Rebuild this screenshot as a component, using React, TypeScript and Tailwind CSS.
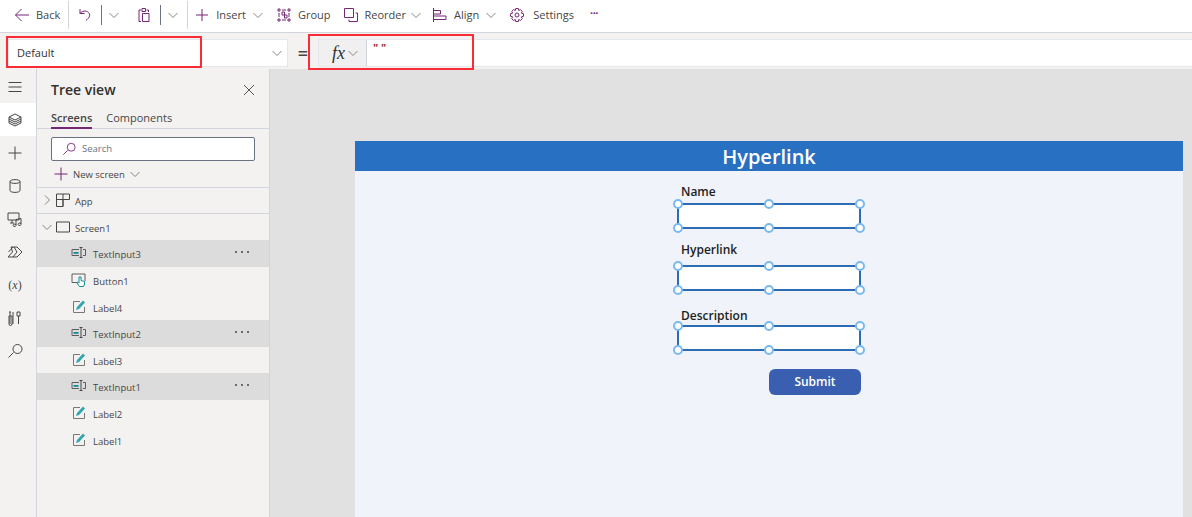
import React from "react";

const P = "#742774";
const Chevron = ({ c = "mr-0", dir = "d" }: { c?: string; dir?: "d" | "r" }) => (
  <svg viewBox="0 0 12 12" className={`w-3 h-3 shrink-0 ${c}`} fill="none" stroke="#7a7876" strokeWidth="0.9">
    {dir === "d" ? <path d="M1.500 4l4.500 4.500L10.500 4" /> : <path d="M4 1.500L8.500 6 4 10.500" />}
  </svg>
);
const Sep = ({ c = "" }: { c?: string }) => <div className={`w-px shrink-0 ${c}`} />;
const Ic = ({ children, c = "" }: { children: React.ReactNode; c?: string }) => (
  <svg viewBox="0 0 16 16" className={`w-4 h-4 shrink-0 ${c}`} fill="none" stroke={P} strokeWidth="1">
    {children}
  </svg>
);
const G = ({ children, c = "" }: { children: React.ReactNode; c?: string }) => (
  <svg viewBox="0 0 16 16" className={`w-4 h-4 shrink-0 ${c}`} fill="none" stroke="#484644" strokeWidth="1">
    {children}
  </svg>
);

function Toolbar() {
  return (
    <div className="h-8 box-content border-b border-gray-300 bg-white shrink-0">
      <div className="h-7.5 flex items-center pl-3.5 text-[11px] text-[#484644]">
        <Ic><path d="M15 8H1.500M7.500 2L1.500 8l6 6" /></Ic>
        <span className="ml-1.5">Back</span>
        <Sep c="ml-2 h-7 bg-gray-300" />
        <Ic c="ml-2"><path d="M3 2v4.500h4.500M3 6.500C5 4 9 3 11.500 5.500c2 2 1.500 5-2.500 8" /></Ic>
        <Sep c="ml-2 h-5 bg-gray-500" />
        <Chevron c="ml-1.5" />
        <Ic c="ml-4"><path d="M5 3H3v11.500h2M6 1.500h3.500v3H6zM10.500 3H12.500v2M6.500 6.500h6.500v8H6.500z" /></Ic>
        <Sep c="ml-2 h-5 bg-gray-500" />
        <Chevron c="ml-1.5" />
        <Sep c="ml-2 h-7 bg-gray-300" />
        <Ic c="ml-1.5"><path d="M8 2v12M2 8h12" /></Ic>
        <span className="ml-1.5">Insert</span>
        <Chevron c="ml-1.5" />
        <Ic c="ml-3"><path d="M2 2h2v2H2zM12 2h2v2h-2zM2 12h2v2H2zM12 12h2v2h-2zM6 5h2.500v3H6zM8.500 8H11v3H8.500zM6 3h4M6 13h4M3 6v4M13 6v4" /></Ic>
        <span className="ml-1.5">Group</span>
        <Ic c="ml-3"><path d="M1.500 1.500h9v9h-9zM12.500 6H14.500v8.500H6V12.500" /></Ic>
        <span className="ml-1.5">Reorder</span>
        <Chevron c="ml-1" />
        <Ic c="ml-2.5"><path d="M1.500 1v14M1.500 3.500h7v3.500h-7M1.500 9h12.500v3.500H1.500" /></Ic>
        <span className="ml-1.5">Align</span>
        <Chevron c="ml-1.5" />
        <Ic c="ml-3"><path d="M6.700 1.500h2.600l.4 2 1.800-.9 1.800 1.800-1 1.700 2.200.6v2.600l-2.200.6 1 1.700-1.800 1.800-1.800-.9-.4 2H6.700l-.4-2-1.800.9-1.800-1.800 1-1.700-2.200-.6V6.700l2.200-.6-1-1.700 1.800-1.800 1.800.9z" /><circle cx="8" cy="8" r="2" /></Ic>
        <span className="ml-2">Settings</span>
        <span className="ml-4 font-bold tracking-tighter -mt-1" style={{ color: P }}>···</span>
      </div>
    </div>
  );
}

function FormulaBar() {
  return (
    <div className="h-9 bg-[#f3f2f1] flex items-center pl-2 pt-1 shrink-0 text-[11px] text-[#323130]">
      <div className="w-70 h-7 bg-white border border-gray-200 flex items-center justify-between pl-2 pr-1">
        <span>Default</span>
        <Chevron />
      </div>
      <span className="w-7.5 text-center text-lg font-semibold text-[#484644] leading-none">=</span>
      <div className="flex-1 h-7 flex border border-gray-200 border-r-0 bg-white">
        <div className="w-12 pl-1.5 bg-[#f0f0f0] border-r border-gray-300 flex items-center justify-center gap-0.5">
          <span className="font-['Liberation_Serif',serif] italic text-lg leading-none text-[#323130]">fx</span>
          <Chevron />
        </div>
        <span className="ml-1.5 text-[#a4262c] font-bold leading-4">" "</span>
      </div>
    </div>
  );
}

const railIcons: React.ReactNode[] = [
  <path d="M1.500 3.500h13M1.500 8h13M1.500 12.500h13" />,
  <path d="M8 2l6 3-6 3-6-3zM2 7l6 3 6-3M2 9l6 3 6-3M2 5v6l6 3 6-3V5" />,
  <path d="M8 1.500v13M1.500 8h13" />,
  <path d="M3 3.500c0-2.500 10-2.500 10 0v9c0 2.500-10 2.500-10 0zM3 3.500c0 2.500 10 2.500 10 0" />,
  <path d="M1 2h11v7H1zM5 9v3M3 12h4M9 14.500v-6l5-1v6M9 14.500a1.500 1.200 0 1 1 0-.5M14 13.500a1.500 1.200 0 1 1 0-.5" />,
  <path d="M4 3h6l5 5-5 5H1l4.500-5zM1.500 8L6 3M6 13l4-5-3-5" />,
  null,
  <path d="M3 2v12M6 2v12M2 2h2M10 2h3v4h-3zM11.500 6v8M5 14a1.500 1.500 0 0 1-3 0V6h3z" />,
  <path d="M6.500 9.500L1.500 14.500M6 6a4.500 4.500 0 1 0 9 0 4.500 4.500 0 1 0-9 0" />,
];

function Rail() {
  return (
    <div className="w-9 box-content border-r border-gray-300 bg-[#f3f2f1] shrink-0 pt-px">
      <div className="grid grid-rows-9 h-[297px]">
        {railIcons.map((d, i) => (
          <div key={i} className={`flex items-center justify-center pr-1.5 ${i === 1 ? "bg-white" : ""}`}>
            {d ? (
              <G>{d}</G>
            ) : (
              <span className="text-xs font-['Liberation_Serif',serif] text-[#484644]">
                (<i>x</i>)
              </span>
            )}
          </div>
        ))}
      </div>
    </div>
  );
}

const TextInputIcon = () => (
  <svg viewBox="0 0 16 16" className="w-4 h-4 shrink-0" fill="none" strokeWidth="1">
    <path d="M8 4.500H1v6h7M12 4.500h2.500v6H12" stroke="#605e5c" />
    <path d="M2.500 7h5v1.800h-5z" fill="#0b8e94" stroke="none" />
    <path d="M8.500 2.500h3M8.500 12.500h3M10 2.500v10" stroke="#484644" />
  </svg>
);
const LabelIcon = () => (
  <svg viewBox="0 0 16 16" className="w-4 h-4 shrink-0" fill="none" strokeWidth="1">
    <path d="M13.500 8v5.500h-11v-11H9" stroke="#7a7876" />
    <path d="M5 11l1-3 6-6.500 2 2L8 10z" fill="#2ea8ad" stroke="none" />
  </svg>
);
const ButtonIcon = () => (
  <svg viewBox="0 0 16 16" className="w-4 h-4 shrink-0" fill="none" strokeWidth="1">
    <path d="M6 10.500H1V2h13v7" stroke="#605e5c" />
    <path d="M8 5v6l-1.500-1-.5 1 2.500 3.500h4l1-2.500v-2.500L10 8.500V5z" stroke="#0b8e94" fill="white" />
  </svg>
);

const items: { n: string; t: "i" | "b" | "l" }[] = [
  { n: "TextInput3", t: "i" },
  { n: "Button1", t: "b" },
  { n: "Label4", t: "l" },
  { n: "TextInput2", t: "i" },
  { n: "Label3", t: "l" },
  { n: "TextInput1", t: "i" },
  { n: "Label2", t: "l" },
  { n: "Label1", t: "l" },
];

function Panel() {
  return (
    <div className="w-58 box-content border-r border-gray-300 bg-[#f3f2f1] shrink-0 flex flex-col text-[#484644] text-[9.500px]">
      <div className="h-6.5 mt-2 px-3.5 flex items-center justify-between">
        <span className="text-sm font-semibold text-[#323130]">Tree view</span>
        <svg viewBox="0 0 12 12" className="w-3 h-3" fill="none" stroke="#484644" strokeWidth="0.9"><path d="M1 1l10 10M11 1L1 11" /></svg>
      </div>
      <div className="mt-0.5 h-6 border-b border-gray-300 pl-3.5 flex gap-3.5 text-[11px]">
        <span className="h-6 border-b-2 border-[#742774] font-semibold pt-0.5 leading-5.5">Screens</span>
        <span className="pt-0.5 leading-5.5">Components</span>
      </div>
      <div className="mx-3.5 mt-2 h-6 bg-white border border-gray-500 rounded-xs flex items-center pl-2.5 gap-1.5 text-gray-500">
        <svg viewBox="0 0 16 16" className="w-3.5 h-3.5" fill="none" stroke={P} strokeWidth="1"><path d="M6.500 9.500L1.500 14.500M6 6a4.500 4.500 0 1 0 9 0 4.500 4.500 0 1 0-9 0" /></svg>
        <span>Search</span>
      </div>
      <div className="h-6.5 pl-4 flex items-center">
        <Ic><path d="M8 1.500v13M1.500 8h13" /></Ic>
        <span className="ml-1 pt-0.5">New screen</span>
        <Chevron c="ml-1" />
      </div>
      <div className="grid grid-rows-10 h-[266px]">
        <div className="flex items-center border-y border-gray-300 pl-1">
          <Chevron dir="r" />
          <G c="ml-0.5"><path d="M1.500 2h13v5.500h-13zM1.500 2v12.500H8V2M8 7.500v7" /></G>
          <span className="ml-1 pt-1">App</span>
        </div>
        <div className="flex items-center pl-1">
          <Chevron />
          <G c="ml-0.5"><path d="M1.500 3h13v10h-13z" /></G>
          <span className="ml-1 pt-1">Screen1</span>
        </div>
        {items.map((it) => (
          <div key={it.n} className={`flex items-center pl-8.5 pr-5 ${it.t === "i" ? "bg-[#dcdcdc]" : ""}`}>
            {it.t === "i" ? <TextInputIcon /> : it.t === "b" ? <ButtonIcon /> : <LabelIcon />}
            <span className="ml-1.5 flex-1 pt-1">{it.n}</span>
            {it.t === "i" && (
              <span className="flex gap-1 -mt-0.5">
                <i className="w-0.5 h-0.5 rounded-full bg-[#484644]" />
                <i className="w-0.5 h-0.5 rounded-full bg-[#484644]" />
                <i className="w-0.5 h-0.5 rounded-full bg-[#484644]" />
              </span>
            )}
          </div>
        ))}
      </div>
    </div>
  );
}

const Handle = ({ c }: { c: string }) => (
  <span className={`absolute w-2.5 h-2.5 rounded-full bg-white border-2 border-[#7ab8ee] ${c}`} />
);

function Selected() {
  return (
    <div className="relative h-6.5 w-full bg-white border-2 border-[#2b6cb5] shrink-0">
      <Handle c="-left-1.5 -top-1.5" />
      <Handle c="left-1/2 -translate-x-1/2 -top-1.5" />
      <Handle c="-right-1.5 -top-1.5" />
      <Handle c="-left-1.5 -bottom-1.5" />
      <Handle c="left-1/2 -translate-x-1/2 -bottom-1.5" />
      <Handle c="-right-1.5 -bottom-1.5" />
    </div>
  );
}

function Canvas() {
  return (
    <div className="flex-1 bg-[#e1e1e1] pt-18 pl-21 pr-2 min-w-0">
      <div className="bg-[#f0f3f9] h-full flex flex-col items-center border-x border-[#e1e1e1]">
        <div className="w-full h-7.5 pt-px bg-[#2770c2] text-white text-xl font-semibold flex items-center justify-center">Hyperlink</div>
        <div className="w-46 pt-2.5 flex flex-col text-xs font-semibold text-[#201f1e]">
          <div className="h-5 leading-5.5 pl-1 mb-0.5">Name</div>
          <Selected />
          <div className="h-5 leading-5.5 pl-1 mt-2.5 mb-1.5">Hyperlink</div>
          <Selected />
          <div className="h-5 leading-5.5 pl-1 mt-3.5">Description</div>
          <Selected />
          <div className="self-end mt-4.5 w-23 h-6.5 rounded-md bg-[#3a5fb0] text-white text-xs flex items-center justify-center">Submit</div>
        </div>
      </div>
    </div>
  );
}

export default function App() {
  return (
    <div className="relative h-screen w-full overflow-hidden flex flex-col bg-white font-['Open_Sans',sans-serif]">
      <Toolbar />
      <FormulaBar />
      <div className="flex-1 flex min-h-0">
        <Rail />
        <Panel />
        <Canvas />
      </div>
      <div className="absolute left-1.5 top-9 w-49 h-8 border-2 border-red-500" />
      <div className="absolute left-77 top-8.5 w-41.5 h-9 border-2 border-red-500" />
    </div>
  );
}
